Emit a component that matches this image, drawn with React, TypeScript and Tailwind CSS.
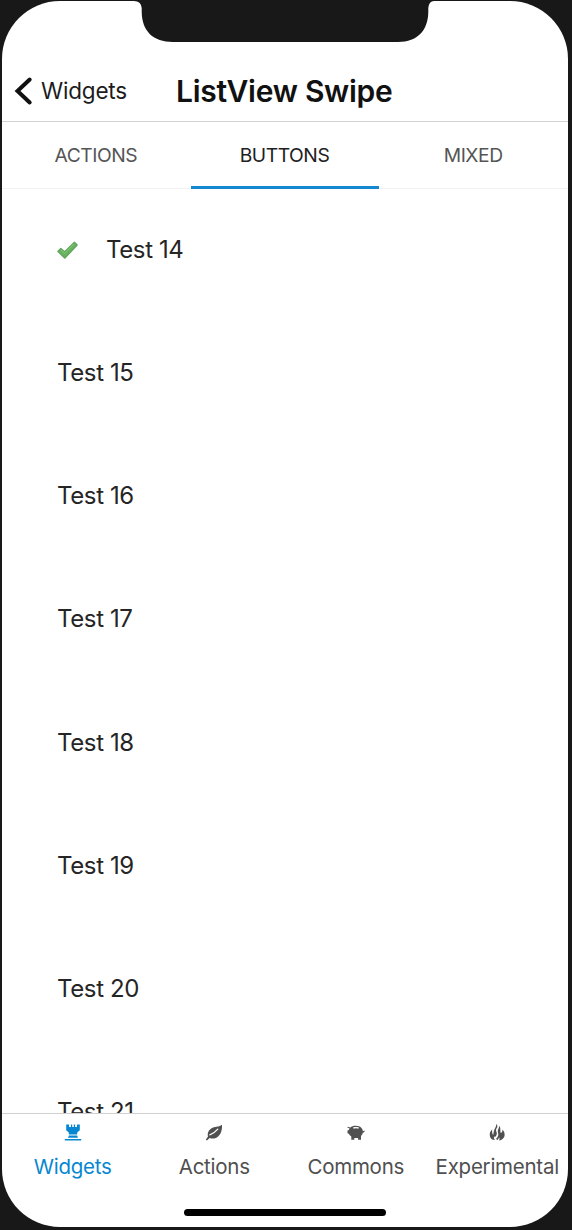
import React from "react";

const rows = [15, 16, 17, 18, 19, 20, 21];

function CheckMark() {
  return (
    <svg viewBox="0 0 22 20" className="h-5 w-[22px] shrink-0">
      <path d="M1.8 11.4 L4.8 8.4 L8.7 11.8 L18.4 2.2 L21.2 5 L8.9 18.2 Z" fill="#68b35f" stroke="#5fa459" strokeWidth="1.2" strokeLinejoin="round" />
      <path d="M4.8 9.8 L8.7 13.2 L18.2 3.7" fill="none" stroke="#86cb7c" strokeWidth="1" />
    </svg>
  );
}

function RookIcon() {
  return (
    <svg viewBox="0 0 18 18" className="h-[18px] w-[18px]" fill="currentColor">
      <path d="M2.2 1.4H5V4H7V1.4H8.2V4H9.8V1.4H11V4H13V1.4H15.8V7.2L13.2 9.6V11.6H4.8V9.6L2.2 7.2Z" />
      <path d="M4.9 12.4H13.1L14 14.8H4ZM.8 16H17.2V17.6H.8Z" />
    </svg>
  );
}

function LeafIcon() {
  return (
    <svg viewBox="0 0 18 18" className="h-[18px] w-[18px]">
      <path d="M17 1.8C17.4 8.3 15 13.3 10.8 15C8.5 15.9 6.2 15.6 4.6 15L2 17.6L.8 16.8L3 13.6C1.8 9.1 5 5.3 9 4.3C12 3.6 14.8 3.5 17 1.8Z" fill="currentColor" />
      <path d="M4.8 11.9C7.4 11.2 9.9 9.5 12.8 6.2" fill="none" stroke="white" strokeWidth="1.2" strokeLinecap="round" />
    </svg>
  );
}

function PigIcon() {
  return (
    <svg viewBox="0 0 18 18" className="h-[18px] w-[18px]">
      <path d="M3.4 4.6C5.4 2.2 12.4 2.2 14.5 5C15.3 6 15.8 7 15.9 8.2L17.5 7.4L17.8 7.9L16.9 9.5H15.9C15.5 11.3 14.9 12.1 14 13V16.8H11.1V15H7.3V16.8H4.3V13.6C3.2 12.8 2.3 11.9 1.8 10.8L.5 10.2V7.4L1.8 6.9L2.6 5.4L.4 4.5V3.8Z" fill="currentColor" />
      <path d="M6.3 5C8 4.5 10 4.5 11.6 5" fill="none" stroke="white" strokeWidth="1.4" />
    </svg>
  );
}

function FlameIcon() {
  return (
    <svg viewBox="0 0 18 18" className="h-[18px] w-[18px]">
      <path d="M8.4 1C8.4 4.4 5.8 6.2 5.6 9.5C5.5 10.8 5.4 11.6 5 12.1C4.5 10.7 3.8 9.1 4.2 6.4C2.2 8.1 1.5 10.2 1.8 12.4C2.1 15.3 4.2 17 7 17.1C5.8 15.6 5.7 14.3 6.1 13.1L6.7 14.3C8.9 12.8 9.4 10.8 8.3 8.6C7.6 7 8.4 5.4 9.4 4C9.4 2.7 9.1 1.8 8.4 1Z" fill="currentColor" />
      <path d="M11.1 2.8C11.2 5.8 9.2 7 10 9.4C10.8 11.7 10.2 13.8 8.2 15.4L9 17.2C10.2 16.5 10.8 15.5 11 14.3C11.8 15.2 11.6 16.4 11.1 17.6C14.8 16.8 16.8 14.3 16.6 11.2C16.5 9.1 15.6 7.6 14.4 6.4C14.7 8.3 14.1 9.3 12.8 10.1C11.9 7.9 13.2 5.1 11.1 2.8Z" fill="currentColor" />
    </svg>
  );
}

const navItems = [
  { label: "Widgets", Icon: RookIcon, tone: "text-[#0787d1]" },
  { label: "Actions", Icon: LeafIcon, tone: "text-[#505050]" },
  { label: "Commons", Icon: PigIcon, tone: "text-[#505050]" },
  { label: "Experimental", Icon: FlameIcon, tone: "text-[#505050]" },
];

export default function App() {
  return (
    <div className="h-[1230px] w-[572px] overflow-hidden bg-[#181818] pt-px pl-[2px] font-['Inter',sans-serif]">
      <div className="relative flex h-[1226px] w-[566px] flex-col overflow-hidden rounded-[58px] bg-white">
        <svg viewBox="0 0 300 42" className="absolute top-[-1px] left-[132px] h-[42px] w-[300px]">
          <path d="M0 0V1Q7 1 7.7 8V12C8 31 19 42 39 42H264C284 42 294 30 294.3 12V8Q295 1 300 1V0Z" fill="#181818" />
        </svg>

        <header className="flex h-[121px] shrink-0 items-end border-b border-[#d3d3d3] pb-[12px]">
          <button className="flex h-9 w-[174px] items-center pl-[11px] text-[22.5px] tracking-[-0.2px] text-[#1c1c1c]">
            <svg viewBox="0 0 20 32" className="mr-[8px] h-8 w-5 shrink-0" fill="none" stroke="#111111" strokeWidth="4" strokeLinecap="round" strokeLinejoin="miter">
              <path d="M16.7 4.5L4.5 16L16.7 27.5" />
            </svg>
            Widgets
          </button>
          <h1 className="flex h-9 items-center text-[30px] font-semibold tracking-[-0.28px] whitespace-nowrap text-[#111111]">ListView Swipe</h1>
        </header>

        <nav className="grid h-[67px] shrink-0 grid-cols-3 border-b border-[#f2f2f2] text-[19.25px] tracking-[-0.45px] text-[#555555]">
          <button className="pr-px">ACTIONS</button>
          <button className="relative pr-px text-[#202020]">
            BUTTONS
            <span className="absolute inset-x-0 bottom-[-1px] h-[3px] bg-[#1489d2]" />
          </button>
          <button className="pr-px">MIXED</button>
        </nav>

        <main className="min-h-0 flex-1 overflow-hidden text-[24px] tracking-[-0.38px] text-[#252525]">
          <div className="flex h-[122.4px] items-center pl-[54px]">
            <CheckMark />
            <span className="ml-[28px]">Test 14</span>
          </div>
          {rows.map((n) => (
            <div key={n} className="flex h-[123.2px] items-center pl-[55px]">Test {n}</div>
          ))}
        </main>

        <footer className="h-[114px] shrink-0 border-t border-[#d0d0d0]">
          <div className="grid grid-cols-4 pt-[9px] text-[20.5px] tracking-[-0.25px]">
            {navItems.map(({ label, Icon, tone }) => (
              <button key={label} className={"flex flex-col items-center " + tone}>
                <Icon />
                <span className="mt-[11px] leading-[30px]">{label}</span>
              </button>
            ))}
          </div>
          <div className="mx-auto mt-[27px] h-[7px] w-[202px] rounded-full bg-black" />
        </footer>
      </div>
    </div>
  );
}
